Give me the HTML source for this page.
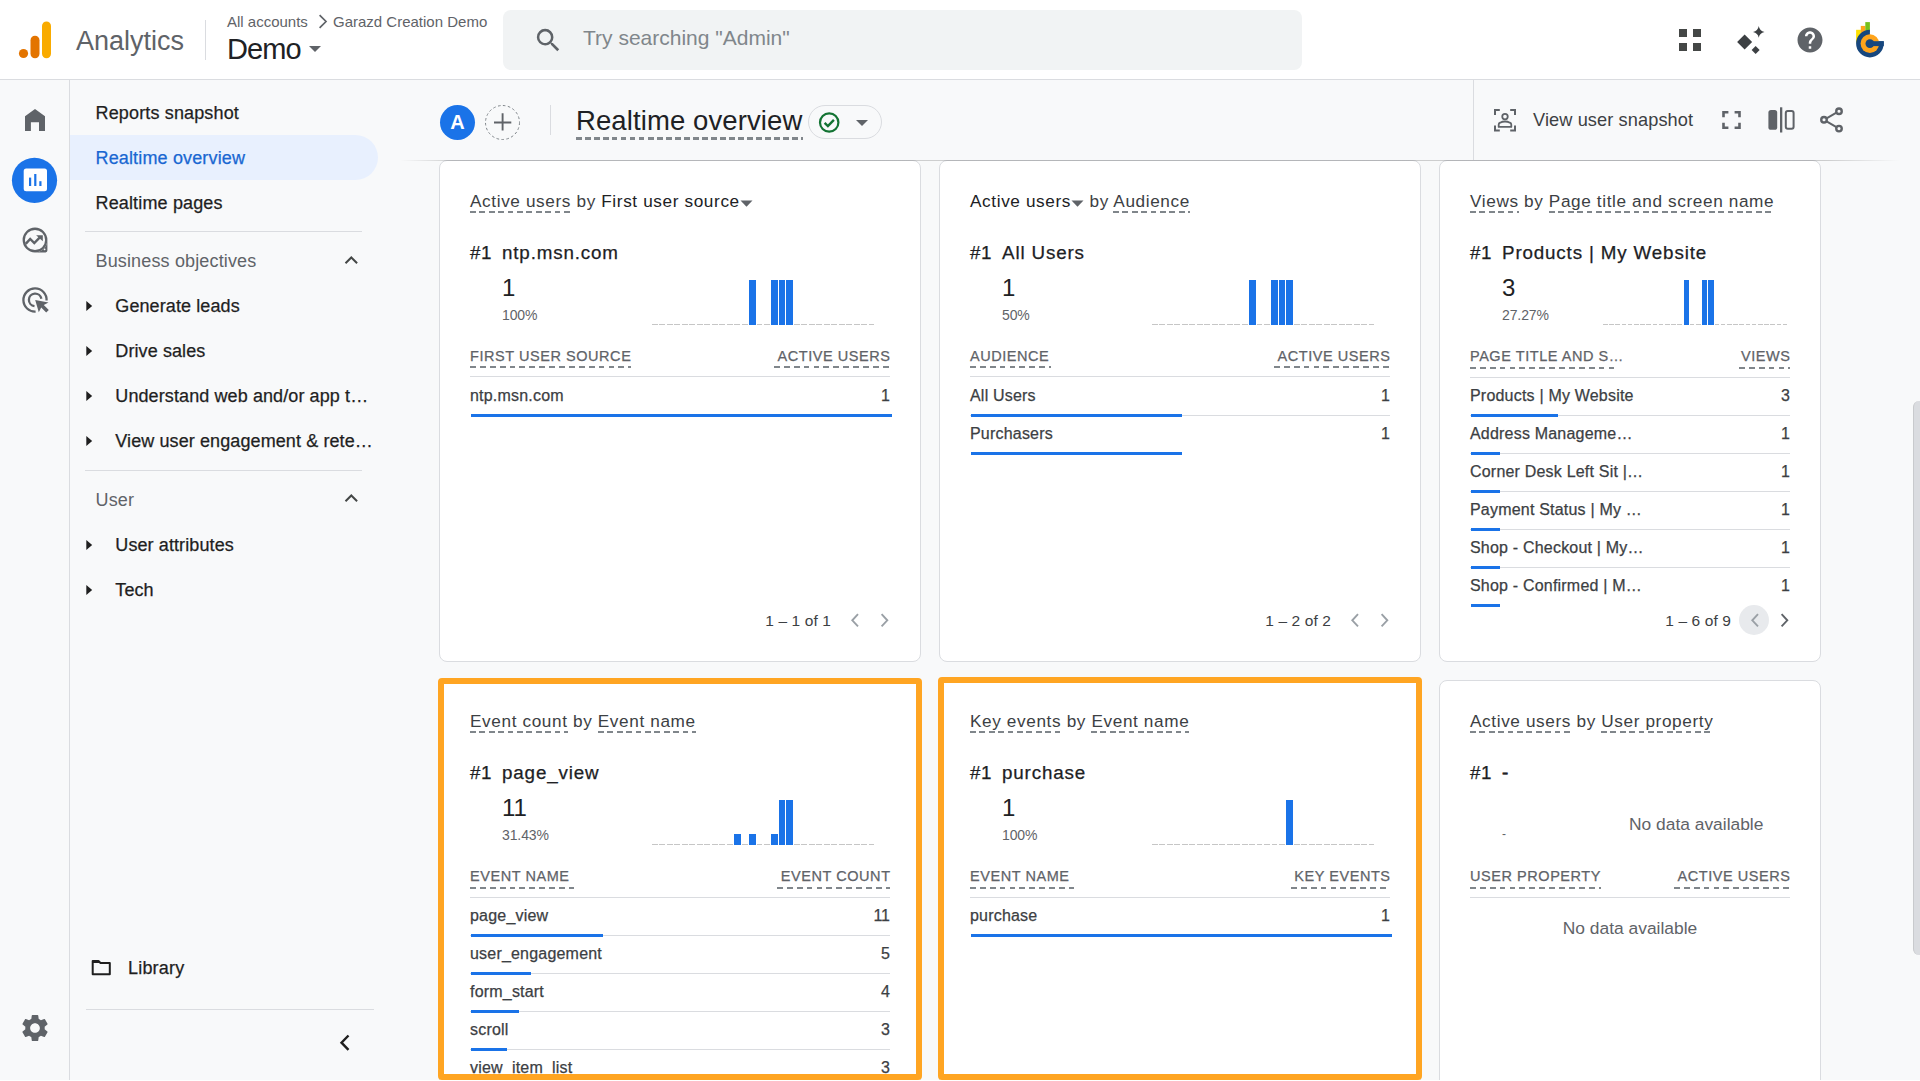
<!DOCTYPE html><html><head><meta charset="utf-8"><style>
html,body{margin:0;padding:0;}
body{width:1920px;height:1081px;overflow:hidden;position:relative;background:#f8f9fa;font-family:"Liberation Sans",sans-serif;}
.t{position:absolute;white-space:nowrap;line-height:1;}
.r{position:absolute;}
svg{position:absolute;overflow:visible;}
.med{-webkit-text-stroke:0.25px currentColor;}
</style></head><body>
<div class="r" style="left:0px;top:0px;width:1920px;height:79px;background:#fff;"></div>
<div class="r" style="left:0px;top:79px;width:1920px;height:1px;background:#dadce0;"></div>
<svg style="left:0px;top:0px" width="60" height="80"><circle cx="23.5" cy="53.5" r="4.6" fill="#e37400"/><rect x="30.5" y="35.8" width="9" height="22.4" rx="4.5" fill="#e37400"/><rect x="42" y="21.4" width="9" height="36.8" rx="4.5" fill="#f9ab00"/></svg>
<div class="t " style="top:27.64px;font-size:27px;color:#5f6368;left:76.00px;">Analytics</div>
<div class="r" style="left:205px;top:20px;width:1px;height:40px;background:#dadce0;"></div>
<div class="t " style="top:14.00px;font-size:15px;color:#5f6368;left:227.00px;">All accounts</div>
<svg style="left:316px;top:14px" width="14" height="16"><path d="M3.6 1.2 L10 7.5 L3.6 13.8" fill="none" stroke="#5f6368" stroke-width="1.7"/></svg>
<div class="t " style="top:14.00px;font-size:15px;color:#5f6368;left:333.00px;">Garazd Creation Demo</div>
<div class="t " style="top:34.95px;font-size:29px;color:#202124;left:227.00px;letter-spacing:-0.9px;">Demo</div>
<svg style="left:309px;top:46px" width="12" height="6"><path d="M0 0 L12 0 L6 6z" fill="#5f6368"/></svg>
<div class="r" style="left:503px;top:10px;width:799px;height:60px;background:#f1f3f4;border-radius:8px;"></div>
<svg style="left:532.5px;top:24.9px" width="30.7" height="30.7" viewBox="0 0 24 24"><path fill="#5f6368" d="M15.5 14h-.79l-.28-.27A6.471 6.471 0 0 0 16 9.5 6.5 6.5 0 1 0 9.5 16c1.61 0 3.09-.59 4.23-1.57l.27.28v.79l5 4.99L20.49 19l-4.99-5zm-6 0C7.01 14 5 11.99 5 9.5S7.01 5 9.5 5 14 7.01 14 9.5 11.99 14 9.5 14z"/></svg>
<div class="t " style="top:27.22px;font-size:21px;color:#80868b;left:583.00px;">Try searching "Admin"</div>
<svg style="left:1679px;top:29px" width="22" height="22"><rect x="0" y="0" width="8" height="8" fill="#444746"/><rect x="14" y="0" width="8" height="8" fill="#444746"/><rect x="0" y="14" width="8" height="8" fill="#444746"/><rect x="14" y="14" width="8" height="8" fill="#444746"/></svg>
<svg style="left:1730px;top:20px" width="40" height="40"><path d="M14.6 4.4 L22.1 11.9 L14.6 19.4 L7.1 11.9z" fill="#3c4043" transform="translate(0,10)"/><path d="M25.6 26 L29.6 30 L25.6 34 L21.6 30z" fill="#3c4043"/><path d="M28.75 6 Q29.6 11.1 34.5 11.9 Q29.6 12.7 28.75 17.8 Q27.9 12.7 23 11.9 Q27.9 11.1 28.75 6z" fill="#3c4043"/></svg>
<svg style="left:1795.4px;top:24.75px" width="30" height="30" viewBox="0 0 24 24"><path fill="#5f6368" d="M12 2C6.48 2 2 6.48 2 12s4.48 10 10 10 10-4.48 10-10S17.52 2 12 2zm1 17h-2v-2h2v2zm2.07-7.75-.9.92C13.45 12.9 13 13.5 13 15h-2v-.5c0-1.1.45-2.1 1.17-2.830l1.24-1.26c.37-.36.59-.86.59-1.410 0-1.1-.9-2-2-2s-2 .9-2 2H8c0-2.21 1.79-4 4-4s4 1.790 4 4c0 .88-.36 1.68-.93 2.25z"/></svg>
<svg style="left:1850px;top:18px" width="40" height="44"><rect x="6.1" y="11.8" width="4.8" height="13" fill="#ffe000"/><rect x="10.8" y="7.9" width="4.6" height="12" fill="#ffa41b"/><rect x="15.3" y="4.1" width="4.6" height="10" fill="#76c01c"/><path d="M19.9 25.6 L19.9 11.8 A13.8 13.8 0 1 0 33.7 25.6 L33.7 23.2 L19.9 23.2 Z" fill="#17477e"/><circle cx="19.9" cy="25.6" r="9.3" fill="#ffa41b"/><rect x="19.9" y="23.2" width="13.9" height="4.9" fill="#17477e"/><circle cx="19.9" cy="25.6" r="4.4" fill="#17477e"/></svg>
<div class="r" style="left:69px;top:80px;width:1px;height:1000px;background:#dadce0;"></div>
<svg style="left:0px;top:80px" width="70" height="70"><path d="M35 28.9 L45 36.3 L45 50.9 L39 50.9 L39 42.2 L30.9 42.2 L30.9 50.9 L25 50.9 L25 36.3z" fill="#5f6368"/></svg>
<svg style="left:0px;top:140px" width="70" height="70"><circle cx="34.5" cy="40.3" r="22.6" fill="#1a73e8"/><rect x="23.7" y="28.4" width="23.3" height="22.9" rx="2.5" fill="#fff"/><rect x="29" y="37.6" width="2.2" height="8.4" fill="#1a73e8"/><rect x="34.2" y="34" width="2.2" height="12" fill="#1a73e8"/><rect x="39.3" y="41.2" width="2.2" height="4.8" fill="#1a73e8"/></svg>
<svg style="left:0px;top:200px" width="70" height="70"><path d="M47.4 40 L47.4 50.6 Q47.4 52.4 45.6 52.4 L35 52.4 A12.4 12.4 0 0 0 47.4 40 Z" fill="#5f6368"/><circle cx="35" cy="40" r="11.25" fill="none" stroke="#5f6368" stroke-width="2.3"/><circle cx="44.6" cy="49.3" r="0.9" fill="#f8f9fa"/><path d="M25.7 43.9 L30.2 38.9 L34.3 43 L39.6 37.7" fill="none" stroke="#5f6368" stroke-width="2.4"/><path d="M36.1 35.2 L42.8 35.2 L42.8 41.2z" fill="#5f6368"/></svg>
<svg style="left:0px;top:260px" width="70" height="70"><path d="M46.6 40.5 A11.6 11.6 0 1 0 35.6 51.6" fill="none" stroke="#5f6368" stroke-width="2.3"/><path d="M41.4 38.8 A6.3 6.3 0 1 0 34.5 46.2" fill="none" stroke="#5f6368" stroke-width="2.3"/><path d="M35.2 40 L38.8 52.3 L41.2 47.6 L46.2 52.6 L48.8 50 L43.8 45 L48.5 42.6z" fill="#5f6368"/></svg>
<svg style="left:20px;top:1013px" width="30" height="30" viewBox="0 0 24 24"><path fill="#5f6368" transform="translate(12 12) scale(1.08) translate(-12 -12)" d="M19.14 12.94c.04-.3.06-.61.06-.94 0-.32-.02-.64-.07-.94l2.03-1.58a.49.49 0 0 0 .12-.61l-1.92-3.32a.488.488 0 0 0-.59-.22l-2.39.96c-.5-.38-1.03-.7-1.62-.94l-.36-2.54a.484.484 0 0 0-.48-.41h-3.84c-.24 0-.43.17-.47.41l-.36 2.54c-.59.24-1.13.57-1.62.94l-2.39-.96c-.22-.08-.47 0-.59.22L2.74 8.87c-.12.21-.08.47.12.61l2.03 1.58c-.05.3-.09.63-.09.94s.02.64.07.94l-2.03 1.58a.49.49 0 0 0-.12.61l1.92 3.32c.12.22.37.29.59.22l2.39-.96c.5.38 1.03.7 1.62.94l.36 2.54c.05.24.24.41.48.41h3.84c.24 0 .44-.17.47-.41l.36-2.54c.59-.24 1.13-.56 1.62-.94l2.39.96c.22.08.47 0 .59-.22l1.92-3.32c.12-.22.07-.47-.12-.61l-2.01-1.58zM12 15.6c-1.98 0-3.6-1.62-3.6-3.6s1.62-3.6 3.6-3.6 3.6 1.62 3.6 3.6-1.62 3.6-3.6 3.6z"/></svg>
<div class="r" style="left:70px;top:135px;width:308px;height:45px;background:#e8f0fe;border-radius:0 22.5px 22.5px 0;"></div>
<div class="t med" style="top:103.76px;font-size:18px;color:#1f1f1f;left:95.50px;letter-spacing:0.15px;">Reports snapshot</div>
<div class="t med" style="top:148.56px;font-size:18px;color:#1967d2;left:95.50px;letter-spacing:0.15px;">Realtime overview</div>
<div class="t med" style="top:194.26px;font-size:18px;color:#1f1f1f;left:95.50px;letter-spacing:0.15px;">Realtime pages</div>
<div class="r" style="left:85px;top:231px;width:277px;height:1px;background:#dadce0;"></div>
<div class="t " style="top:251.76px;font-size:18px;color:#5f6368;left:95.50px;letter-spacing:0.15px;">Business objectives</div>
<svg style="left:344px;top:255px" width="15" height="10"><path d="M1.5 8.3 L7.3 2.5 L13.1 8.3" fill="none" stroke="#444746" stroke-width="2"/></svg>
<svg style="left:86px;top:301.0px" width="8" height="11"><path d="M0.3 0 L6.2 5 L0.3 10z" fill="#1f1f1f"/></svg>
<div class="t med" style="top:296.96px;font-size:18px;color:#1f1f1f;left:115.30px;letter-spacing:0.1px;">Generate leads</div>
<svg style="left:86px;top:346.0px" width="8" height="11"><path d="M0.3 0 L6.2 5 L0.3 10z" fill="#1f1f1f"/></svg>
<div class="t med" style="top:341.96px;font-size:18px;color:#1f1f1f;left:115.30px;letter-spacing:0.1px;">Drive sales</div>
<svg style="left:86px;top:391.0px" width="8" height="11"><path d="M0.3 0 L6.2 5 L0.3 10z" fill="#1f1f1f"/></svg>
<div class="t med" style="top:386.96px;font-size:18px;color:#1f1f1f;left:115.30px;letter-spacing:0.1px;">Understand web and/or app t…</div>
<svg style="left:86px;top:436.0px" width="8" height="11"><path d="M0.3 0 L6.2 5 L0.3 10z" fill="#1f1f1f"/></svg>
<div class="t med" style="top:431.96px;font-size:18px;color:#1f1f1f;left:115.30px;letter-spacing:0.1px;">View user engagement &amp; rete…</div>
<div class="r" style="left:85px;top:470px;width:277px;height:1px;background:#dadce0;"></div>
<div class="t " style="top:491.06px;font-size:18px;color:#5f6368;left:95.50px;letter-spacing:0.15px;">User</div>
<svg style="left:344px;top:493px" width="15" height="10"><path d="M1.5 8.3 L7.3 2.5 L13.1 8.3" fill="none" stroke="#444746" stroke-width="2"/></svg>
<svg style="left:86px;top:539.6px" width="8" height="11"><path d="M0.3 0 L6.2 5 L0.3 10z" fill="#1f1f1f"/></svg>
<div class="t med" style="top:535.56px;font-size:18px;color:#1f1f1f;left:115.30px;letter-spacing:0.1px;">User attributes</div>
<svg style="left:86px;top:584.6px" width="8" height="11"><path d="M0.3 0 L6.2 5 L0.3 10z" fill="#1f1f1f"/></svg>
<div class="t med" style="top:580.56px;font-size:18px;color:#1f1f1f;left:115.30px;letter-spacing:0.1px;">Tech</div>
<svg style="left:90px;top:958px" width="24" height="20"><path d="M2.7 3 L8.5 3 L10.5 5 L19.8 5 L19.8 16.2 L2.7 16.2 Z" fill="none" stroke="#1f1f1f" stroke-width="2" stroke-linejoin="round"/><path d="M2.7 3 L8.5 3 L10.5 5 L2.7 5z" fill="#1f1f1f"/></svg>
<div class="t med" style="top:958.76px;font-size:18px;color:#1f1f1f;left:128.00px;letter-spacing:0.2px;">Library</div>
<div class="r" style="left:86px;top:1009px;width:288px;height:1px;background:#dadce0;"></div>
<svg style="left:336px;top:1033px" width="18" height="20"><path d="M12.5 2.5 L5.5 9.7 L12.5 16.9" fill="none" stroke="#1f1f1f" stroke-width="2.4"/></svg>
<div class="r" style="left:439px;top:160px;width:482px;height:502px;background:#fff;border:1px solid #dadce0;border-radius:8px;box-sizing:border-box;"></div>
<div class="r" style="left:939px;top:160px;width:482px;height:502px;background:#fff;border:1px solid #dadce0;border-radius:8px;box-sizing:border-box;"></div>
<div class="r" style="left:1439px;top:160px;width:382px;height:502px;background:#fff;border:1px solid #dadce0;border-radius:8px;box-sizing:border-box;"></div>
<div class="r" style="left:439px;top:680px;width:482px;height:460px;background:#fff;border:1px solid #dadce0;border-radius:8px;box-sizing:border-box;"></div>
<div class="r" style="left:939px;top:680px;width:482px;height:460px;background:#fff;border:1px solid #dadce0;border-radius:8px;box-sizing:border-box;"></div>
<div class="r" style="left:1439px;top:680px;width:382px;height:460px;background:#fff;border:1px solid #dadce0;border-radius:8px;box-sizing:border-box;"></div>
<div class="t " style="top:193.44px;font-size:17.2px;color:#3c4043;left:470.00px;letter-spacing:0.62px;"><span style="color:#3c4043;padding-bottom:1.6px;background:repeating-linear-gradient(to right,#80868b 0 5.8px,transparent 5.8px 9.4px) 0 100%/100% 2px no-repeat">Active users</span><span style="color:#3c4043"> by </span><span style="color:#202124">First user source</span><svg style="position:relative;display:inline-block;vertical-align:baseline;" width="13" height="7"><path d="M0.5 0.5 L12.5 0.5 L6.5 6.8z" fill="#5f6368"/></svg></div>
<div class="t med" style="top:243.59px;font-size:18.8px;color:#202124;left:470.00px;letter-spacing:0.6px;">#1</div>
<div class="t med" style="top:243.59px;font-size:18.8px;color:#202124;left:502.00px;letter-spacing:0.85px;">ntp.msn.com</div>
<div class="t " style="top:275.68px;font-size:24px;color:#202124;left:502.00px;">1</div>
<div class="t " style="top:307.65px;font-size:14px;color:#5f6368;left:502.00px;letter-spacing:-0.1px;">100%</div>
<div class="r" style="left:652px;top:324px;width:224px;height:1px;background:repeating-linear-gradient(to right,#c6c6c6 0 5.87px,transparent 5.87px 7.47px);"></div>
<div class="r" style="left:749.07px;top:279.8px;width:6.57px;height:45px;background:#1a73e8;"></div>
<div class="r" style="left:771.47px;top:279.8px;width:6.57px;height:45px;background:#1a73e8;"></div>
<div class="r" style="left:778.93px;top:279.8px;width:6.57px;height:45px;background:#1a73e8;"></div>
<div class="r" style="left:786.4px;top:279.8px;width:6.57px;height:45px;background:#1a73e8;"></div>
<div class="t med" style="top:348.73px;font-size:14.5px;color:#5f6368;left:470.00px;letter-spacing:0.55px;">FIRST USER SOURCE</div>
<div class="t med" style="top:348.73px;font-size:14.5px;color:#5f6368;right:1030.00px;letter-spacing:0.55px;margin-right:-0.55px;">ACTIVE USERS</div>
<div class="r" style="left:470px;top:366px;width:161px;height:2px;background:repeating-linear-gradient(to right,#80868b 0 5.8px,transparent 5.8px 9.899999999999999px);"></div>
<div class="r" style="left:774px;top:366px;width:116px;height:2px;background:repeating-linear-gradient(to right,#80868b 0 5.8px,transparent 5.8px 9.899999999999999px);"></div>
<div class="r" style="left:470px;top:376px;width:420px;height:1px;background:#dadce0;"></div>
<div class="t med" style="top:388.46px;font-size:16px;color:#3c4043;left:470.00px;letter-spacing:0.2px;">ntp.msn.com</div>
<div class="t med" style="top:388.46px;font-size:16px;color:#3c4043;right:1030.00px;">1</div>
<div class="r" style="left:471px;top:414px;width:421.0px;height:2.6px;background:#1a73e8;"></div>
<div class="t " style="top:612.88px;font-size:15.5px;color:#3c4043;right:1089.00px;letter-spacing:0.1px;">1 – 1 of 1</div>
<svg style="left:849px;top:613px" width="12" height="16"><path d="M9 1.2 L3.3 7.3 L9 13.4" fill="none" stroke="#9aa0a6" stroke-width="1.9"/></svg>
<svg style="left:879px;top:613px" width="12" height="16"><path d="M2.6 1.2 L8.3 7.3 L2.6 13.4" fill="none" stroke="#9aa0a6" stroke-width="1.9"/></svg>
<div class="t " style="top:193.44px;font-size:17.2px;color:#3c4043;left:970.00px;letter-spacing:0.62px;"><span style="color:#202124">Active users</span><svg style="position:relative;display:inline-block;vertical-align:baseline;" width="13" height="7"><path d="M0.5 0.5 L12.5 0.5 L6.5 6.8z" fill="#5f6368"/></svg><span style="color:#3c4043"> by </span><span style="color:#3c4043;padding-bottom:1.6px;background:repeating-linear-gradient(to right,#80868b 0 5.8px,transparent 5.8px 9.4px) 0 100%/100% 2px no-repeat">Audience</span></div>
<div class="t med" style="top:243.59px;font-size:18.8px;color:#202124;left:970.00px;letter-spacing:0.6px;">#1</div>
<div class="t med" style="top:243.59px;font-size:18.8px;color:#202124;left:1002.00px;letter-spacing:0.85px;">All Users</div>
<div class="t " style="top:275.68px;font-size:24px;color:#202124;left:1002.00px;">1</div>
<div class="t " style="top:307.65px;font-size:14px;color:#5f6368;left:1002.00px;letter-spacing:-0.1px;">50%</div>
<div class="r" style="left:1152px;top:324px;width:224px;height:1px;background:repeating-linear-gradient(to right,#c6c6c6 0 5.87px,transparent 5.87px 7.47px);"></div>
<div class="r" style="left:1249.07px;top:279.8px;width:6.57px;height:45px;background:#1a73e8;"></div>
<div class="r" style="left:1271.47px;top:279.8px;width:6.57px;height:45px;background:#1a73e8;"></div>
<div class="r" style="left:1278.93px;top:279.8px;width:6.57px;height:45px;background:#1a73e8;"></div>
<div class="r" style="left:1286.4px;top:279.8px;width:6.57px;height:45px;background:#1a73e8;"></div>
<div class="t med" style="top:348.73px;font-size:14.5px;color:#5f6368;left:970.00px;letter-spacing:0.55px;">AUDIENCE</div>
<div class="t med" style="top:348.73px;font-size:14.5px;color:#5f6368;right:530.00px;letter-spacing:0.55px;margin-right:-0.55px;">ACTIVE USERS</div>
<div class="r" style="left:970px;top:366px;width:81px;height:2px;background:repeating-linear-gradient(to right,#80868b 0 5.8px,transparent 5.8px 9.899999999999999px);"></div>
<div class="r" style="left:1274px;top:366px;width:116px;height:2px;background:repeating-linear-gradient(to right,#80868b 0 5.8px,transparent 5.8px 9.899999999999999px);"></div>
<div class="r" style="left:970px;top:376px;width:420px;height:1px;background:#dadce0;"></div>
<div class="t med" style="top:388.46px;font-size:16px;color:#3c4043;left:970.00px;letter-spacing:0.2px;">All Users</div>
<div class="t med" style="top:388.46px;font-size:16px;color:#3c4043;right:530.00px;">1</div>
<div class="r" style="left:970px;top:415px;width:420px;height:1px;background:#dadce0;"></div>
<div class="r" style="left:971px;top:414px;width:210.5px;height:2.6px;background:#1a73e8;"></div>
<div class="t med" style="top:426.46px;font-size:16px;color:#3c4043;left:970.00px;letter-spacing:0.2px;">Purchasers</div>
<div class="t med" style="top:426.46px;font-size:16px;color:#3c4043;right:530.00px;">1</div>
<div class="r" style="left:971px;top:452px;width:210.5px;height:2.6px;background:#1a73e8;"></div>
<div class="t " style="top:612.88px;font-size:15.5px;color:#3c4043;right:589.00px;letter-spacing:0.1px;">1 – 2 of 2</div>
<svg style="left:1349px;top:613px" width="12" height="16"><path d="M9 1.2 L3.3 7.3 L9 13.4" fill="none" stroke="#9aa0a6" stroke-width="1.9"/></svg>
<svg style="left:1379px;top:613px" width="12" height="16"><path d="M2.6 1.2 L8.3 7.3 L2.6 13.4" fill="none" stroke="#9aa0a6" stroke-width="1.9"/></svg>
<div class="t " style="top:193.44px;font-size:17.2px;color:#3c4043;left:1470.00px;letter-spacing:0.62px;"><span style="color:#3c4043;padding-bottom:1.6px;background:repeating-linear-gradient(to right,#80868b 0 5.8px,transparent 5.8px 9.4px) 0 100%/100% 2px no-repeat">Views</span><span style="color:#3c4043"> by </span><span style="color:#3c4043;padding-bottom:1.6px;background:repeating-linear-gradient(to right,#80868b 0 5.8px,transparent 5.8px 9.4px) 0 100%/100% 2px no-repeat">Page title and screen name</span></div>
<div class="t med" style="top:243.59px;font-size:18.8px;color:#202124;left:1470.00px;letter-spacing:0.6px;">#1</div>
<div class="t med" style="top:243.59px;font-size:18.8px;color:#202124;left:1502.00px;letter-spacing:0.85px;">Products | My Website</div>
<div class="t " style="top:275.68px;font-size:24px;color:#202124;left:1502.00px;">3</div>
<div class="t " style="top:307.65px;font-size:14px;color:#5f6368;left:1502.00px;letter-spacing:-0.1px;">27.27%</div>
<div class="r" style="left:1603px;top:324px;width:186px;height:1px;background:repeating-linear-gradient(to right,#c6c6c6 0 4.60px,transparent 4.60px 6.20px);"></div>
<div class="r" style="left:1683.6px;top:279.8px;width:5.3px;height:45px;background:#1a73e8;"></div>
<div class="r" style="left:1702.2px;top:279.8px;width:5.3px;height:45px;background:#1a73e8;"></div>
<div class="r" style="left:1708.4px;top:279.8px;width:5.3px;height:45px;background:#1a73e8;"></div>
<div class="t med" style="top:348.73px;font-size:14.5px;color:#5f6368;left:1470.00px;letter-spacing:0.55px;">PAGE TITLE AND S…</div>
<div class="t med" style="top:348.73px;font-size:14.5px;color:#5f6368;right:130.00px;letter-spacing:0.55px;margin-right:-0.55px;">VIEWS</div>
<div class="r" style="left:1470px;top:367px;width:146px;height:2px;background:repeating-linear-gradient(to right,#80868b 0 5.8px,transparent 5.8px 9.899999999999999px);"></div>
<div class="r" style="left:1739px;top:367px;width:51px;height:2px;background:repeating-linear-gradient(to right,#80868b 0 5.8px,transparent 5.8px 9.899999999999999px);"></div>
<div class="r" style="left:1470px;top:377px;width:320px;height:1px;background:#dadce0;"></div>
<div class="t med" style="top:388.46px;font-size:16px;color:#3c4043;left:1470.00px;letter-spacing:0.2px;">Products | My Website</div>
<div class="t med" style="top:388.46px;font-size:16px;color:#3c4043;right:130.00px;">3</div>
<div class="r" style="left:1470px;top:415px;width:320px;height:1px;background:#dadce0;"></div>
<div class="r" style="left:1471px;top:414px;width:87.0px;height:2.6px;background:#1a73e8;"></div>
<div class="t med" style="top:426.46px;font-size:16px;color:#3c4043;left:1470.00px;letter-spacing:0.2px;">Address Manageme…</div>
<div class="t med" style="top:426.46px;font-size:16px;color:#3c4043;right:130.00px;">1</div>
<div class="r" style="left:1470px;top:453px;width:320px;height:1px;background:#dadce0;"></div>
<div class="r" style="left:1471px;top:452px;width:29.0px;height:2.6px;background:#1a73e8;"></div>
<div class="t med" style="top:464.46px;font-size:16px;color:#3c4043;left:1470.00px;letter-spacing:0.2px;">Corner Desk Left Sit |…</div>
<div class="t med" style="top:464.46px;font-size:16px;color:#3c4043;right:130.00px;">1</div>
<div class="r" style="left:1470px;top:491px;width:320px;height:1px;background:#dadce0;"></div>
<div class="r" style="left:1471px;top:490px;width:29.0px;height:2.6px;background:#1a73e8;"></div>
<div class="t med" style="top:502.46px;font-size:16px;color:#3c4043;left:1470.00px;letter-spacing:0.2px;">Payment Status | My …</div>
<div class="t med" style="top:502.46px;font-size:16px;color:#3c4043;right:130.00px;">1</div>
<div class="r" style="left:1470px;top:529px;width:320px;height:1px;background:#dadce0;"></div>
<div class="r" style="left:1471px;top:528px;width:29.0px;height:2.6px;background:#1a73e8;"></div>
<div class="t med" style="top:540.46px;font-size:16px;color:#3c4043;left:1470.00px;letter-spacing:0.2px;">Shop - Checkout | My…</div>
<div class="t med" style="top:540.46px;font-size:16px;color:#3c4043;right:130.00px;">1</div>
<div class="r" style="left:1470px;top:567px;width:320px;height:1px;background:#dadce0;"></div>
<div class="r" style="left:1471px;top:566px;width:29.0px;height:2.6px;background:#1a73e8;"></div>
<div class="t med" style="top:578.46px;font-size:16px;color:#3c4043;left:1470.00px;letter-spacing:0.2px;">Shop - Confirmed | M…</div>
<div class="t med" style="top:578.46px;font-size:16px;color:#3c4043;right:130.00px;">1</div>
<div class="r" style="left:1471px;top:604px;width:29.0px;height:2.6px;background:#1a73e8;"></div>
<div class="t " style="top:612.88px;font-size:15.5px;color:#3c4043;right:189.00px;letter-spacing:0.1px;">1 – 6 of 9</div>
<div class="r" style="left:1739px;top:605px;width:30px;height:30px;background:#e8eaed;border-radius:50%;"></div>
<svg style="left:1749px;top:613px" width="12" height="16"><path d="M9 1.2 L3.3 7.3 L9 13.4" fill="none" stroke="#9aa0a6" stroke-width="1.9"/></svg>
<svg style="left:1779px;top:613px" width="12" height="16"><path d="M2.6 1.2 L8.3 7.3 L2.6 13.4" fill="none" stroke="#5f6368" stroke-width="1.9"/></svg>
<div class="t " style="top:713.44px;font-size:17.2px;color:#3c4043;left:470.00px;letter-spacing:0.62px;"><span style="color:#3c4043;padding-bottom:1.6px;background:repeating-linear-gradient(to right,#80868b 0 5.8px,transparent 5.8px 9.4px) 0 100%/100% 2px no-repeat">Event count</span><span style="color:#3c4043"> by </span><span style="color:#3c4043;padding-bottom:1.6px;background:repeating-linear-gradient(to right,#80868b 0 5.8px,transparent 5.8px 9.4px) 0 100%/100% 2px no-repeat">Event name</span></div>
<div class="t med" style="top:763.59px;font-size:18.8px;color:#202124;left:470.00px;letter-spacing:0.6px;">#1</div>
<div class="t med" style="top:763.59px;font-size:18.8px;color:#202124;left:502.00px;letter-spacing:0.85px;">page_view</div>
<div class="t " style="top:795.68px;font-size:24px;color:#202124;left:502.00px;">11</div>
<div class="t " style="top:827.65px;font-size:14px;color:#5f6368;left:502.00px;letter-spacing:-0.1px;">31.43%</div>
<div class="r" style="left:652px;top:844px;width:224px;height:1px;background:repeating-linear-gradient(to right,#c6c6c6 0 5.87px,transparent 5.87px 7.47px);"></div>
<div class="r" style="left:734.13px;top:834.31px;width:6.57px;height:10.49px;background:#1a73e8;"></div>
<div class="r" style="left:749.07px;top:834.31px;width:6.57px;height:10.49px;background:#1a73e8;"></div>
<div class="r" style="left:771.47px;top:834.31px;width:6.57px;height:10.49px;background:#1a73e8;"></div>
<div class="r" style="left:778.93px;top:799.8px;width:6.57px;height:45px;background:#1a73e8;"></div>
<div class="r" style="left:786.4px;top:799.8px;width:6.57px;height:45px;background:#1a73e8;"></div>
<div class="t med" style="top:868.73px;font-size:14.5px;color:#5f6368;left:470.00px;letter-spacing:0.55px;">EVENT NAME</div>
<div class="t med" style="top:868.73px;font-size:14.5px;color:#5f6368;right:1030.00px;letter-spacing:0.55px;margin-right:-0.55px;">EVENT COUNT</div>
<div class="r" style="left:470px;top:887px;width:104px;height:2px;background:repeating-linear-gradient(to right,#80868b 0 5.8px,transparent 5.8px 9.899999999999999px);"></div>
<div class="r" style="left:777px;top:887px;width:113px;height:2px;background:repeating-linear-gradient(to right,#80868b 0 5.8px,transparent 5.8px 9.899999999999999px);"></div>
<div class="r" style="left:470px;top:897px;width:420px;height:1px;background:#dadce0;"></div>
<div class="t med" style="top:908.46px;font-size:16px;color:#3c4043;left:470.00px;letter-spacing:0.2px;">page_view</div>
<div class="t med" style="top:908.46px;font-size:16px;color:#3c4043;right:1030.00px;">11</div>
<div class="r" style="left:470px;top:935px;width:420px;height:1px;background:#dadce0;"></div>
<div class="r" style="left:471px;top:934px;width:132.3px;height:2.6px;background:#1a73e8;"></div>
<div class="t med" style="top:946.46px;font-size:16px;color:#3c4043;left:470.00px;letter-spacing:0.2px;">user_engagement</div>
<div class="t med" style="top:946.46px;font-size:16px;color:#3c4043;right:1030.00px;">5</div>
<div class="r" style="left:470px;top:973px;width:420px;height:1px;background:#dadce0;"></div>
<div class="r" style="left:471px;top:972px;width:60.2px;height:2.6px;background:#1a73e8;"></div>
<div class="t med" style="top:984.46px;font-size:16px;color:#3c4043;left:470.00px;letter-spacing:0.2px;">form_start</div>
<div class="t med" style="top:984.46px;font-size:16px;color:#3c4043;right:1030.00px;">4</div>
<div class="r" style="left:470px;top:1011px;width:420px;height:1px;background:#dadce0;"></div>
<div class="r" style="left:471px;top:1010px;width:48.1px;height:2.6px;background:#1a73e8;"></div>
<div class="t med" style="top:1022.46px;font-size:16px;color:#3c4043;left:470.00px;letter-spacing:0.2px;">scroll</div>
<div class="t med" style="top:1022.46px;font-size:16px;color:#3c4043;right:1030.00px;">3</div>
<div class="r" style="left:470px;top:1049px;width:420px;height:1px;background:#dadce0;"></div>
<div class="r" style="left:471px;top:1048px;width:36.1px;height:2.6px;background:#1a73e8;"></div>
<div class="t med" style="top:1060.46px;font-size:16px;color:#3c4043;left:470.00px;letter-spacing:0.2px;">view_item_list</div>
<div class="t med" style="top:1060.46px;font-size:16px;color:#3c4043;right:1030.00px;">3</div>
<div class="r" style="left:471px;top:1086px;width:36.1px;height:2.6px;background:#1a73e8;"></div>
<div class="t " style="top:713.44px;font-size:17.2px;color:#3c4043;left:970.00px;letter-spacing:0.62px;"><span style="color:#3c4043;padding-bottom:1.6px;background:repeating-linear-gradient(to right,#80868b 0 5.8px,transparent 5.8px 9.4px) 0 100%/100% 2px no-repeat">Key events</span><span style="color:#3c4043"> by </span><span style="color:#3c4043;padding-bottom:1.6px;background:repeating-linear-gradient(to right,#80868b 0 5.8px,transparent 5.8px 9.4px) 0 100%/100% 2px no-repeat">Event name</span></div>
<div class="t med" style="top:763.59px;font-size:18.8px;color:#202124;left:970.00px;letter-spacing:0.6px;">#1</div>
<div class="t med" style="top:763.59px;font-size:18.8px;color:#202124;left:1002.00px;letter-spacing:0.85px;">purchase</div>
<div class="t " style="top:795.68px;font-size:24px;color:#202124;left:1002.00px;">1</div>
<div class="t " style="top:827.65px;font-size:14px;color:#5f6368;left:1002.00px;letter-spacing:-0.1px;">100%</div>
<div class="r" style="left:1152px;top:844px;width:224px;height:1px;background:repeating-linear-gradient(to right,#c6c6c6 0 5.87px,transparent 5.87px 7.47px);"></div>
<div class="r" style="left:1286.4px;top:799.8px;width:6.57px;height:45px;background:#1a73e8;"></div>
<div class="t med" style="top:868.73px;font-size:14.5px;color:#5f6368;left:970.00px;letter-spacing:0.55px;">EVENT NAME</div>
<div class="t med" style="top:868.73px;font-size:14.5px;color:#5f6368;right:530.00px;letter-spacing:0.55px;margin-right:-0.55px;">KEY EVENTS</div>
<div class="r" style="left:970px;top:887px;width:104px;height:2px;background:repeating-linear-gradient(to right,#80868b 0 5.8px,transparent 5.8px 9.899999999999999px);"></div>
<div class="r" style="left:1291px;top:887px;width:99px;height:2px;background:repeating-linear-gradient(to right,#80868b 0 5.8px,transparent 5.8px 9.899999999999999px);"></div>
<div class="r" style="left:970px;top:897px;width:420px;height:1px;background:#dadce0;"></div>
<div class="t med" style="top:908.46px;font-size:16px;color:#3c4043;left:970.00px;letter-spacing:0.2px;">purchase</div>
<div class="t med" style="top:908.46px;font-size:16px;color:#3c4043;right:530.00px;">1</div>
<div class="r" style="left:971px;top:934px;width:421.0px;height:2.6px;background:#1a73e8;"></div>
<div class="t " style="top:713.44px;font-size:17.2px;color:#3c4043;left:1470.00px;letter-spacing:0.62px;"><span style="color:#3c4043;padding-bottom:1.6px;background:repeating-linear-gradient(to right,#80868b 0 5.8px,transparent 5.8px 9.4px) 0 100%/100% 2px no-repeat">Active users</span><span style="color:#3c4043"> by </span><span style="color:#3c4043;padding-bottom:1.6px;background:repeating-linear-gradient(to right,#80868b 0 5.8px,transparent 5.8px 9.4px) 0 100%/100% 2px no-repeat">User property</span></div>
<div class="t med" style="top:763.59px;font-size:18.8px;color:#202124;left:1470.00px;letter-spacing:0.6px;">#1</div>
<div class="t " style="top:763.59px;font-size:18.8px;color:#202124;left:1502.00px;-webkit-text-stroke:0.6px #202124;">-</div>
<div class="t " style="top:827.84px;font-size:12px;color:#5f6368;left:1502.00px;">-</div>
<div class="t " style="top:816.27px;font-size:17.4px;color:#5f6368;left:1629.00px;">No data available</div>
<div class="t med" style="top:868.73px;font-size:14.5px;color:#5f6368;left:1470.00px;letter-spacing:0.55px;">USER PROPERTY</div>
<div class="t med" style="top:868.73px;font-size:14.5px;color:#5f6368;right:130.00px;letter-spacing:0.55px;margin-right:-0.55px;">ACTIVE USERS</div>
<div class="r" style="left:1470px;top:887px;width:131px;height:2px;background:repeating-linear-gradient(to right,#80868b 0 5.8px,transparent 5.8px 9.899999999999999px);"></div>
<div class="r" style="left:1674px;top:887px;width:116px;height:2px;background:repeating-linear-gradient(to right,#80868b 0 5.8px,transparent 5.8px 9.899999999999999px);"></div>
<div class="r" style="left:1470px;top:897px;width:320px;height:1px;background:#dadce0;"></div>
<div class="t " style="top:920.27px;font-size:17.4px;color:#5f6368;left:1630.00px;transform:translateX(-50%);">No data available</div>
<div class="r" style="left:438px;top:678px;width:484px;height:402px;background:transparent;border:6px solid #ffa522;border-radius:4px;box-sizing:border-box;"></div>
<div class="r" style="left:938px;top:677px;width:484px;height:403px;background:transparent;border:6px solid #ffa522;border-radius:4px;box-sizing:border-box;"></div>
<div class="r" style="left:390px;top:80px;width:1530px;height:80px;background:#f8f9fa;"></div>
<div class="r" style="left:400px;top:160px;width:1500px;height:1px;background:linear-gradient(to right,rgba(0,0,0,0),rgba(0,0,0,0.17) 3.5%,rgba(0,0,0,0.18) 95%,rgba(0,0,0,0));"></div>
<svg style="left:439px;top:104px" width="90" height="40"><circle cx="18.5" cy="18.5" r="17.5" fill="#1a73e8"/><circle cx="63.5" cy="18.5" r="17" fill="none" stroke="#80868b" stroke-width="1" stroke-dasharray="2.6 2.4"/><path d="M55 18.5 H72.3 M63.6 9.3 V26.5" stroke="#5f6368" stroke-width="1.9"/></svg>
<div class="t " style="top:111.97px;font-size:20px;color:#fff;left:457.50px;font-weight:bold;transform:translateX(-50%);">A</div>
<div class="r" style="left:550px;top:105px;width:1px;height:30px;background:#dadce0;"></div>
<div class="t " style="top:106.72px;font-size:27.5px;color:#202124;left:576.00px;letter-spacing:0.1px;">Realtime overview</div>
<div class="r" style="left:576px;top:137px;width:227px;height:3px;background:repeating-linear-gradient(to right,#80868b 0 5.5px,transparent 5.5px 9.0px);"></div>
<div class="r" style="left:808px;top:105px;width:74px;height:34px;background:#f8f9fa;border:1px solid #dadce0;border-radius:18px;box-sizing:border-box;"></div>
<svg style="left:818px;top:112px" width="22" height="22"><circle cx="11.2" cy="10.5" r="9.2" fill="none" stroke="#137333" stroke-width="2.2"/><path d="M6.6 10.8 L9.9 14 L15.9 7.8" fill="none" stroke="#137333" stroke-width="2.4"/></svg>
<svg style="left:856px;top:120px" width="12" height="6"><path d="M0 0 L12 0 L6 6z" fill="#5f6368"/></svg>
<div class="r" style="left:1473px;top:80px;width:1px;height:80px;background:#dadce0;"></div>
<svg style="left:1494px;top:109px" width="24" height="23"><path d="M1 6 V1 H5.8 M16.2 1 H21 V6 M1 16.5 V21.5 H5.8 M16.2 21.5 H21 V16.5" fill="none" stroke="#5f6368" stroke-width="2"/><circle cx="11" cy="7.6" r="2.75" fill="none" stroke="#5f6368" stroke-width="1.8"/><path d="M4.7 17.9 L4.7 15.7 Q4.7 14.3 6.1 13.7 Q8.3 12.5 11 12.5 Q13.7 12.5 15.9 13.7 Q17.3 14.3 17.3 15.7 L17.3 17.9 Z" fill="none" stroke="#5f6368" stroke-width="1.8" stroke-linejoin="round"/></svg>
<div class="t " style="top:110.84px;font-size:18.2px;color:#3c4043;left:1533.00px;letter-spacing:0.1px;">View user snapshot</div>
<svg style="left:1720px;top:109px" width="24" height="24"><path d="M3.5 8.2 V3.3 H8.4 M14.6 3.3 H19.5 V8.2 M3.5 13.8 V18.7 H8.4 M14.6 18.7 H19.5 V13.8" fill="none" stroke="#5f6368" stroke-width="2.6"/></svg>
<svg style="left:1765px;top:105px" width="32" height="30"><rect x="3.4" y="5" width="8.8" height="19.8" rx="2.6" fill="#5f6368"/><rect x="15" y="2.3" width="2.3" height="25.2" fill="#5f6368"/><rect x="20.8" y="6" width="7.8" height="17.8" rx="2" fill="none" stroke="#5f6368" stroke-width="2"/></svg>
<svg style="left:1815px;top:103px" width="34" height="34"><path d="M9 16.8 L24 8.2 M9 16.8 L24 25.6" stroke="#5f6368" stroke-width="2"/><circle cx="24" cy="8.2" r="2.75" fill="#f8f9fa" stroke="#5f6368" stroke-width="2.4"/><circle cx="9" cy="16.8" r="2.75" fill="#f8f9fa" stroke="#5f6368" stroke-width="2.4"/><circle cx="24" cy="25.6" r="2.75" fill="#f8f9fa" stroke="#5f6368" stroke-width="2.4"/></svg>
<div class="r" style="left:1913px;top:401px;width:12px;height:554px;background:#dadce0;border-radius:6px;border-left:1px solid #c8cacd;box-sizing:border-box;"></div>
<div class="r" style="left:0px;top:1080px;width:1920px;height:1px;background:#fff;"></div>
</body></html>
